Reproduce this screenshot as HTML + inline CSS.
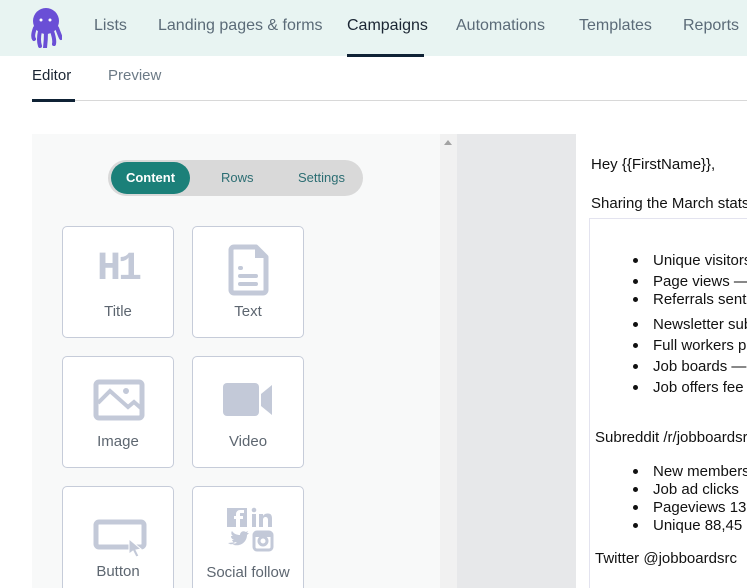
<!DOCTYPE html>
<html><head><meta charset="utf-8"><style>
*{margin:0;padding:0;box-sizing:border-box}
html,body{width:747px;height:588px;overflow:hidden}
body{background:#fff;font-family:"Liberation Sans",sans-serif;position:relative}
.hdr{position:absolute;left:0;top:0;width:747px;height:56px;background:#e8f4f2}
.nav{position:absolute;top:17px;font-size:16px;color:#5b6b78}
.nav.act{color:#1a2533}
.ul{position:absolute;height:3px;background:#0f2235}
.tab{position:absolute;top:67px;font-size:15px;color:#6c7a86}
.line{position:absolute;left:32px;top:100px;width:715px;height:1px;background:#d8d8d8}
.panel{position:absolute;left:32px;top:134px;width:408px;height:454px;background:#f8f9f9}
.sb{position:absolute;left:440px;top:134px;width:17px;height:454px;background:#f1f1f1}
.gray{position:absolute;left:457px;top:134px;width:119px;height:454px;background:#e7e8ea}
.pill{position:absolute;left:108px;top:160px;width:255px;height:36px;border-radius:18px;background:#d9d9d9}
.pill .on{position:absolute;left:3px;top:2px;width:79px;height:32px;border-radius:16px;background:#1b8079;color:#fff;font-weight:bold;font-size:13px;text-align:center;line-height:32px}
.pill span{position:absolute;top:10px;font-size:13px;color:#2c6e73}
.tile{position:absolute;width:112px;height:112px;border:1px solid #c6ccd9;border-radius:5px;background:#fff}
.tile .lb{position:absolute;left:0;right:0;top:76px;text-align:center;font-size:15px;color:#5d6670}
.tile svg{position:absolute}
.em{position:absolute;left:591px;font-size:15px;color:#111;white-space:nowrap}
.box{position:absolute;left:589px;top:218px;width:170px;height:380px;border:1px solid #e3e3ef;border-right:none}
ul.l{position:absolute;left:653px;font-size:15px;color:#111;list-style:none;white-space:nowrap}
ul.l li{position:relative;height:21px}
ul.l li:before{content:"";position:absolute;left:-20px;top:6px;width:5px;height:5px;border-radius:50%;background:#111}
</style></head><body>
<div class="hdr"></div>
<svg style="position:absolute;left:30px;top:6px" width="32" height="42" viewBox="0 0 32 42">
<circle cx="16" cy="15" r="13" fill="#6a4fd6"/>
<path d="M5 22 Q2 30 4 33 M10 25 Q8 34 10 40 M16 25 Q16 34 15 42 M22 25 Q25 34 24 38 M27 22 Q30 30 31 32" stroke="#6a4fd6" stroke-width="4" fill="none" stroke-linecap="round"/>
<circle cx="11" cy="14" r="1.5" fill="#fff"/><circle cx="20" cy="14" r="1.5" fill="#fff"/>
</svg>
<div class="nav" style="left:94px">Lists</div>
<div class="nav" style="left:158px">Landing pages &amp; forms</div>
<div class="nav act" style="left:347px">Campaigns</div>
<div class="ul" style="left:347px;top:54px;width:77px"></div>
<div class="nav" style="left:456px">Automations</div>
<div class="nav" style="left:579px">Templates</div>
<div class="nav" style="left:683px">Reports</div>
<div class="tab" style="left:32px;color:#1a2533">Editor</div>
<div class="tab" style="left:108px">Preview</div>
<div class="line"></div>
<div class="ul" style="left:32px;top:99px;width:43px"></div>
<div class="panel"></div>
<div class="sb"><div style="position:absolute;left:4px;top:6px;width:0;height:0;border-left:4px solid transparent;border-right:4px solid transparent;border-bottom:5px solid #a3a3a3"></div></div>
<div class="gray"></div>
<div class="pill"><div class="on">Content</div><span style="left:113px">Rows</span><span style="left:190px">Settings</span></div>

<div class="tile" style="left:62px;top:226px"><div style="position:absolute;left:0;right:0;top:20px;text-align:center;font:bold 40px 'Liberation Mono',monospace;color:#c3c9d8;letter-spacing:-3px">H1</div><div class="lb">Title</div></div>
<div class="tile" style="left:192px;top:226px"><svg style="left:35px;top:17px" width="42" height="52" viewBox="0 0 42 52"><path d="M6 3h22l10 10v33a3 3 0 0 1-3 3H6a3 3 0 0 1-3-3V6a3 3 0 0 1 3-3z" fill="none" stroke="#c3c9d8" stroke-width="5" stroke-linejoin="round"/><path d="M27 3v11h11" fill="#c3c9d8"/><rect x="10" y="22" width="5" height="4" rx="2" fill="#c3c9d8"/><rect x="10" y="30" width="20" height="4" rx="2" fill="#c3c9d8"/><rect x="10" y="38" width="20" height="4" rx="2" fill="#c3c9d8"/></svg><div class="lb">Text</div></div>
<div class="tile" style="left:62px;top:356px"><svg style="left:30px;top:22px" width="52" height="42" viewBox="0 0 52 42"><rect x="3" y="3" width="46" height="36" rx="3" fill="none" stroke="#c3c9d8" stroke-width="5"/><path d="M5 24l12-12 18 16 6-5 8 7" fill="none" stroke="#c3c9d8" stroke-width="4"/><circle cx="33" cy="12" r="3" fill="#c3c9d8"/></svg><div class="lb">Image</div></div>
<div class="tile" style="left:192px;top:356px"><svg style="left:29px;top:25px" width="52" height="36" viewBox="0 0 52 36"><rect x="1" y="1" width="36" height="33" rx="4" fill="#c3c9d8"/><path d="M39 12l11-9v30l-11-9z" fill="#c3c9d8"/></svg><div class="lb">Video</div></div>
<div class="tile" style="left:62px;top:486px"><svg style="left:30px;top:32px" width="56" height="40" viewBox="0 0 56 40"><rect x="3" y="3" width="48" height="25" rx="3" fill="none" stroke="#c3c9d8" stroke-width="5"/><path d="M36 20l12 10-5 1 3 6-3 1-3-6-4 3z" fill="#c3c9d8" stroke="#fff" stroke-width="1"/></svg><div class="lb">Button</div></div>
<div class="tile" style="left:192px;top:486px"><svg style="left:33px;top:20px" width="48" height="46" viewBox="0 0 48 46"><rect x="1" y="1" width="20" height="19" fill="#c3c9d8"/><path d="M14 20v-8h3v-3h-3V6h4V3h-4a4 4 0 0 0-4 4v2H8v3h2v8z" fill="#fff"/><rect x="26" y="7" width="4" height="13" fill="#c3c9d8"/><circle cx="28" cy="3" r="2.3" fill="#c3c9d8"/><path d="M33 7h4v2c1-2 3-2.5 5-2.5 3 0 4 2 4 5V20h-4v-7c0-2-1-3-2.5-3S37 11 37 13v7h-4z" fill="#c3c9d8"/><g transform="translate(0,8)"><path d="M2 28c3 2 6 2 8 0-2 0-3-1-4-3h2c-2-1-3-2-3-4 1 0 1 0 2 0-2-1-2-4-1-5 2 3 5 4 8 4 0-3 3-5 6-3l2-1-1 2h2l-2 2c0 7-7 13-16 9 3 0 5-1 6-2" fill="#c3c9d8"/></g><rect x="28" y="25" width="18" height="18" rx="3" fill="none" stroke="#c3c9d8" stroke-width="3"/><circle cx="37" cy="34" r="4" fill="none" stroke="#c3c9d8" stroke-width="3"/><rect x="28" y="25" width="18" height="5" fill="#c3c9d8"/></svg><div class="lb" style="top:77px">Social follow</div></div>

<div class="em" style="top:156px">Hey {{FirstName}},</div>
<div class="em" style="top:195px">Sharing the March stats</div>
<div class="box"></div>
<ul class="l" style="top:252px">
<li>Unique visitors</li><li>Page views —</li><li style="height:23px;margin-top:-3px">Referrals sent</li><li style="margin-top:2px">Newsletter sub</li><li>Full workers p</li><li>Job boards —</li><li>Job offers fee</li></ul>
<div class="em" style="top:429px;left:595px">Subreddit /r/jobboardsrc</div>
<ul class="l" style="top:463px;line-height:18px">
<li style="height:18px">New members</li><li style="height:18px">Job ad clicks</li><li style="height:18px">Pageviews 13</li><li style="height:18px">Unique 88,45</li></ul>
<div class="em" style="top:550px;left:595px">Twitter @jobboardsrc</div>
</body></html>
